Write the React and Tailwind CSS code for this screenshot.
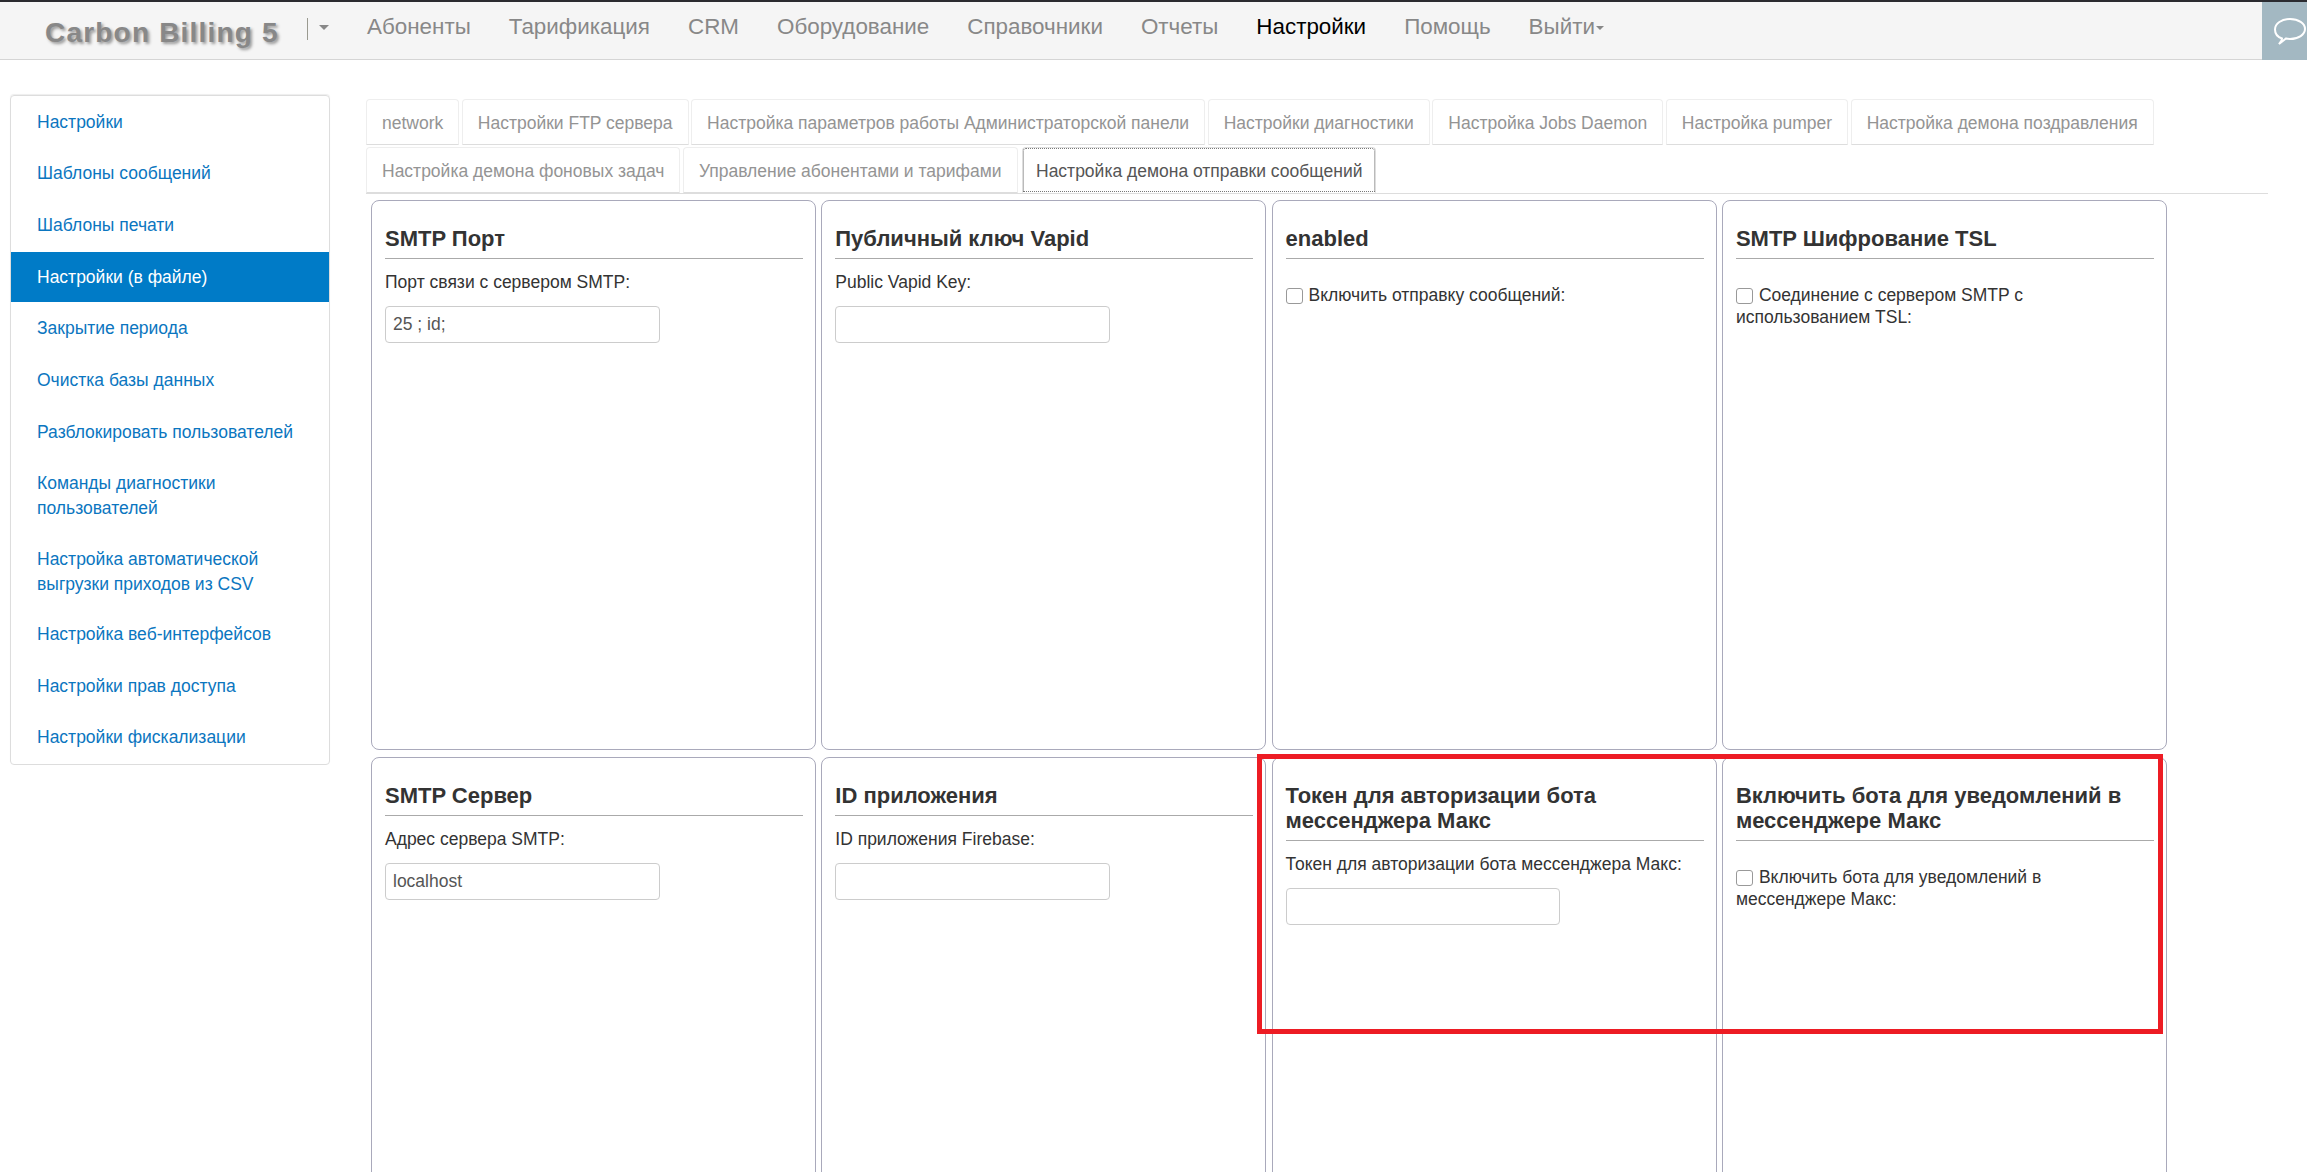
const navItems = ["Абоненты", "Тарификация", "CRM", "Оборудование", "Справочники", "Отчеты", "Настройки", "Помощь"];

const sideItems = [
  { label: "Настройки" },
  { label: "Шаблоны сообщений" },
  { label: "Шаблоны печати" },
  { label: "Настройки (в файле)", active: true },
  { label: "Закрытие периода" },
  { label: "Очистка базы данных" },
  { label: "Разблокировать пользователей" },
  { label: "Команды диагностики пользователей", tall: true },
  { label: "Настройка автоматической выгрузки приходов из CSV", tall: true },
  { label: "Настройка веб-интерфейсов" },
  { label: "Настройки прав доступа" },
  { label: "Настройки фискализации" },
];

const tabs = [
  "network",
  "Настройки FTP сервера",
  "Настройка параметров работы Администраторской панели",
  "Настройки диагностики",
  "Настройка Jobs Daemon",
  "Настройка pumper",
  "Настройка демона поздравления",
  "Настройка демона фоновых задач",
  "Управление абонентами и тарифами",
];

const TextCard = ({ title, label, value }) => (
  <div className="h-[550px] rounded-lg border border-[#a9a9bb] pl-[13px] pr-[12px] pt-[25px]">
    <h3 className="border-b border-[#aaaaaa] pb-[7px] text-[22px] font-bold leading-[25px] text-[#333333]">{title}</h3>
    <label className="mt-[13px] block text-[17.5px] leading-[20px] text-[#333333]">{label}</label>
    <input
      readOnly
      value={value}
      className="mt-[14px] block h-[37px] w-[274.5px] rounded border border-[#cccccc] px-[7px] text-[17.5px] text-[#555555] outline-none"
    />
  </div>
);

const CheckCard = ({ title, label }) => (
  <div className="h-[550px] rounded-lg border border-[#a9a9bb] pl-[13px] pr-[12px] pt-[25px]">
    <h3 className="border-b border-[#aaaaaa] pb-[7px] text-[22px] font-bold leading-[25px] text-[#333333]">{title}</h3>
    <label className="mt-[25px] block w-[400px] text-[17.5px] leading-[22px] text-[#333333]">
      <input
        type="checkbox"
        readOnly
        className="mr-[6px] inline-block h-[16px] w-[17px] appearance-none rounded-[3px] border border-[#999999] bg-white align-[-3px]"
      />
      {label}
    </label>
  </div>
);

export default function App() {
  return (
    <div className="relative h-[1172px] overflow-hidden bg-white font-['Liberation_Sans',sans-serif]">
      {/* top navbar */}
      <header className="flex h-[60px] items-start border-t-2 border-b border-t-[#2b2b30] border-b-[#d5d5d5] bg-[#f5f5f5]">
        <div className="ml-[45px] mt-[15px] w-[262px] text-[28px] font-bold leading-[32px] tracking-[1.2px] text-[#888888] [text-shadow:2px_2px_3px_#999999]">
          Carbon Billing 5
        </div>
        <div className="mt-[16px] h-[22px] w-px bg-[#9a9a90]" />
        <div className="ml-[11px] mt-[23px] size-0 border-x-[5px] border-t-[5px] border-x-transparent border-t-[#888888]" />
        <nav className="ml-[38px] flex gap-[38px] text-[22.4px] leading-[50px] text-[#888888]">
          {navItems.map((item) => (
            <a key={item} className={item === "Настройки" ? "text-black" : ""}>
              {item}
            </a>
          ))}
          <a className="flex items-center">
            Выйти
            <span className="ml-[1px] mt-[2px] size-0 border-x-[4px] border-t-[4px] border-x-transparent border-t-[#888888]" />
          </a>
        </nav>
        <div className="ml-auto flex h-[58px] w-[45px] items-center bg-[#a3b8c2] pl-[12px]">
          <svg width="32" height="27" viewBox="0 0 32 27" fill="none" stroke="#ffffff" strokeWidth="2" className="shrink-0">
            <path d="M8 20.5C3.5 19 1 15.5 1 11.5C1 5.5 7.5 1 16 1C24.5 1 31 5.5 31 11C31 16.5 24.5 21 16 21C14.5 21 13 21 12 20.5L5 26C6.5 24 8 22.5 8 20.5Z" />
          </svg>
        </div>
      </header>

      <div className="flex gap-[36px] pl-[10px] pt-[35px]">
        {/* left menu */}
        <aside className="flex h-fit w-[320px] shrink-0 flex-col gap-[1.7px] rounded border border-[#dddddd] py-[1px] shadow-[0_-1px_1px_#eeeeee]">
          {sideItems.map((item) => (
            <a
              key={item.label}
              className={`block pl-[26px] pr-[26px] pt-[12.5px] text-[17.5px] leading-[25px] ${item.tall ? "pb-[11.2px]" : "pb-[12.5px]"} ${
                item.active ? "bg-[#007bc7] text-white" : "text-[#0b76c0]"
              }`}
            >
              {item.label}
            </a>
          ))}
        </aside>

        <main className="w-[1902px] pt-[4px]">
          {/* tabs */}
          <div className="flex flex-wrap gap-x-[2.5px] gap-y-[2px] border-b border-[#dddddd] text-[17.5px] leading-[20px] text-[#949494]">
            {tabs.map((tab) => (
              <a key={tab} className="flex h-[46px] items-center rounded-t border border-[#eeeeee] border-b-[#dddddd] px-[15px] pt-[2px]">
                {tab}
              </a>
            ))}
            <a className="-mb-px ml-[2px] flex h-[46px] items-center rounded-t border border-[#dddddd] border-b-white bg-white px-[13px] pt-[2px] text-[#555555] outline-1 -outline-offset-2 outline-dotted outline-[#777777]">
              Настройка демона отправки сообщений
            </a>
          </div>

          {/* settings cards */}
          <div className="ml-[5px] mt-[6px] grid grid-cols-[repeat(4,445px)] gap-x-[5.3px] gap-y-[7px]">
            <TextCard title="SMTP Порт" label="Порт связи с сервером SMTP:" value="25 ; id;" />
            <TextCard title="Публичный ключ Vapid" label="Public Vapid Key:" value="" />
            <CheckCard title="enabled" label="Включить отправку сообщений:" />
            <CheckCard title="SMTP Шифрование TSL" label="Соединение с сервером SMTP с использованием TSL:" />
            <TextCard title="SMTP Сервер" label="Адрес сервера SMTP:" value="localhost" />
            <TextCard title="ID приложения" label="ID приложения Firebase:" value="" />
            <TextCard
              title="Токен для авторизации бота мессенджера Макс"
              label="Токен для авторизации бота мессенджера Макс:"
              value=""
            />
            <CheckCard
              title="Включить бота для уведомлений в мессенджере Макс"
              label="Включить бота для уведомлений в мессенджере Макс:"
            />
          </div>
        </main>
      </div>

      {/* red annotation frame drawn over the screenshot */}
      <div className="absolute left-[1257px] top-[754px] h-[280px] w-[906px] border-[5px] border-[#ed1c24]" />
    </div>
  );
}
